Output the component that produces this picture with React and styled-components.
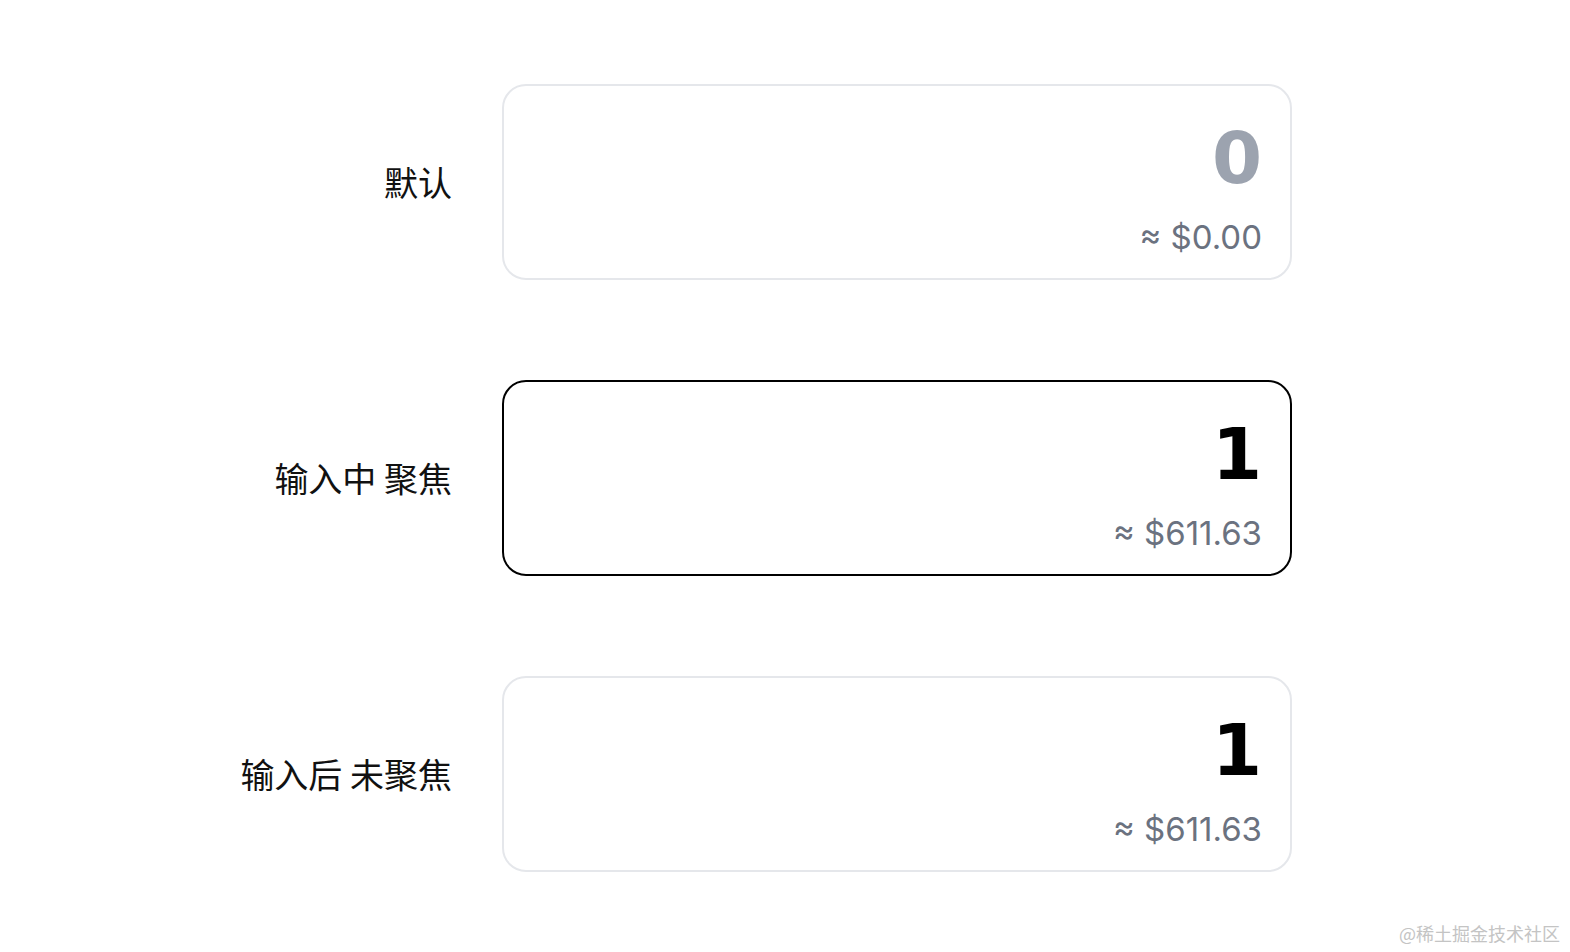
import React from "react";
import styled, { createGlobalStyle } from "styled-components";

const GlobalStyle = createGlobalStyle`
  html, body {
    margin: 0;
    padding: 0;
    background: #ffffff;
  }
  body {
    font-family: "Noto Sans CJK SC", "Noto Sans", sans-serif;
  }
`;

const rows = [
  { label: "默认", value: "0", usd: "≈ $0.00", state: "empty" },
  { label: "输入中 聚焦", value: "1", usd: "≈ $611.63", state: "focused" },
  { label: "输入后 未聚焦", value: "1", usd: "≈ $611.63", state: "filled" },
];

function App() {
  return (
    <>
      <GlobalStyle />
      <Page>
        <List>
          {rows.map((r) => (
            <Row key={r.label}>
              <Label>{r.label}</Label>
              <Field $focused={r.state === "focused"}>
                <Amount $empty={r.state === "empty"}>{r.value}</Amount>
                <Usd>{r.usd}</Usd>
              </Field>
            </Row>
          ))}
        </List>
        <Watermark>@稀土掘金技术社区</Watermark>
      </Page>
    </>
  );
}

export default App;

const Page = styled.div`
  position: relative;
  width: 1570px;
  height: 952px;
  overflow: hidden;
`;

const List = styled.div`
  display: flex;
  flex-direction: column;
  gap: 100px;
  padding-top: 84px;
`;

const Row = styled.div`
  display: grid;
  grid-template-columns: 452px 790px;
  column-gap: 50px;
  align-items: center;
`;

const Label = styled.div`
  text-align: right;
  font-size: 34px;
  line-height: 40px;
  color: #111;
  font-family: "Noto Sans CJK SC", sans-serif;
`;

const Field = styled.div`
  box-sizing: border-box;
  width: 790px;
  height: 196px;
  border: 2px solid ${(p) => (p.$focused ? "#000" : "#e5e7eb")};
  border-radius: 24px;
  display: flex;
  flex-direction: column;
  align-items: flex-end;
  padding: 32px 28px 0 0;
`;

const Amount = styled.div`
  font-family: "DejaVu Sans", sans-serif;
  font-weight: 700;
  font-size: 72px;
  line-height: 80px;
  color: ${(p) => (p.$empty ? "#9ca3af" : "#000")};
`;

const Usd = styled.div`
  margin-top: 19px;
  font-family: "Inter", "Liberation Sans", sans-serif;
  font-size: 33px;
  line-height: 40px;
  color: #6b7280;
`;

const Watermark = styled.div`
  position: absolute;
  right: 10px;
  bottom: 6px;
  font-family: "Noto Sans CJK SC", sans-serif;
  font-size: 18px;
  color: #c4c4c4;
`;
